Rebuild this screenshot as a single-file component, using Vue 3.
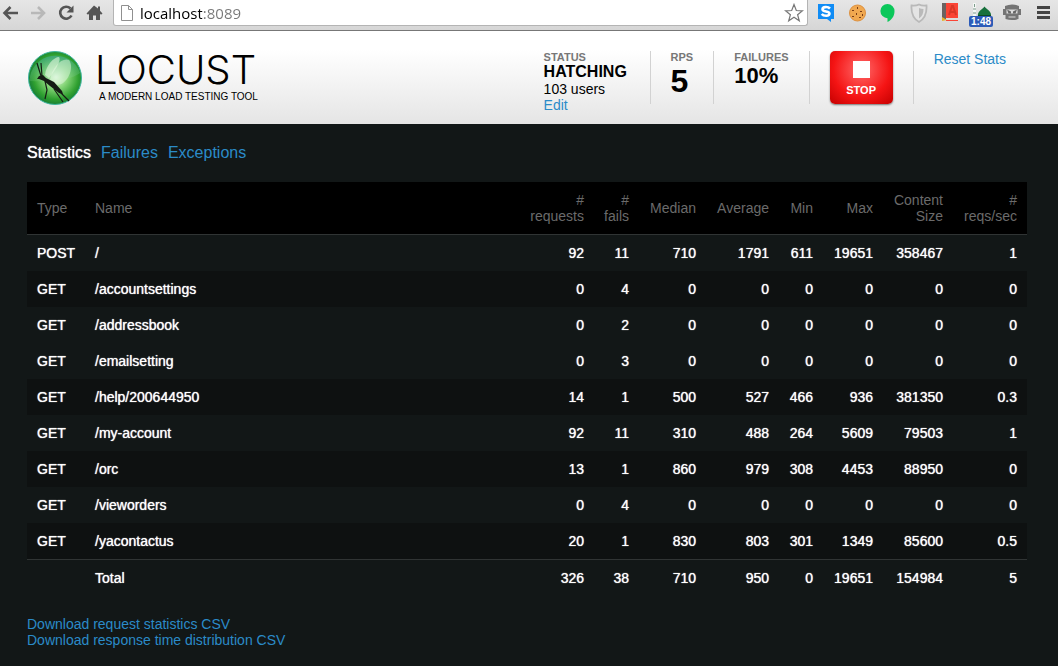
<template>
  <div class="page">
    <div class="browser-bar">
      <div class="nav-buttons">
        <button class="nav-button" aria-label="Back">
          <svg width="20" height="20" viewBox="0 0 20 20" fill="none" stroke="#555" stroke-width="2.6">
            <path d="M18 10H4.500M10.500 4l-6 6 6 6" />
          </svg>
        </button>
        <button class="nav-button" aria-label="Forward">
          <svg width="20" height="20" viewBox="0 0 20 20" fill="none" stroke="#b8b8b8" stroke-width="2.6">
            <path d="M3 10h13M10 4l6 6-6 6" />
          </svg>
        </button>
        <button class="nav-button" aria-label="Reload">
          <svg width="20" height="20" viewBox="0 0 20 20" fill="none">
            <path d="M15.5 12.5A6 6 0 1 1 14.5 5.5" stroke="#555" stroke-width="2.6" />
            <path d="M17.5 2.500v7h-7z" fill="#555" />
          </svg>
        </button>
        <button class="nav-button" aria-label="Home">
          <svg width="20" height="20" viewBox="0 0 20 20" fill="#555">
            <path d="M10 2.500L2.500 10.500l1.500 1.200 1-1V17h4v-4.500h3V17h4v-6.300l1 1 1.500-1.200-2.500-2.700V3.500h-2v2z" />
          </svg>
        </button>
      </div>
      <div class="address-bar">
        <svg class="page-icon" width="12" height="16" viewBox="0 0 12 16" fill="#fff" stroke="#909090">
          <path d="M.5.5h7l4 4v11H.5zM7.500.5v4h4" />
        </svg>
        <input class="address-input" type="text" aria-label="Address" value="localhost:8089" />
        <button class="star-button" aria-label="Bookmark">
          <svg width="20" height="20" viewBox="0 0 20 20" fill="#fff" stroke="#777" stroke-width="1.200">
            <path d="M10 1.500l2.300 6 6.200.3-4.900 3.900 1.700 6.100-5.300-3.500-5.300 3.500 1.700-6.100L1.500 7.800l6.200-.3z" />
          </svg>
        </button>
      </div>
      <div class="extensions">
        <button class="extension" aria-label="Chat">
          <svg width="20" height="20" viewBox="0 0 20 20">
            <path d="M2 1h16v15h-3v3l-4-3H2z" fill="#108cf5" />
            <path d="M14 5.500C12 3.500 6.500 3.500 6.500 6.200c0 3 7 1.400 7 4.400 0 3-6 2.600-7.800.4" fill="none" stroke="#fff" stroke-width="2.600" />
          </svg>
        </button>
        <button class="extension" aria-label="Cookies">
          <svg width="20" height="20" viewBox="0 0 20 20">
            <circle cx="10.500" cy="10" r="8" fill="#f0a850" stroke="#dd9140" />
            <path d="M5 7h2v1H5zM10 4h1v2h-1zM13 8h2v1h-2zM9 10h1v2H9zM5 13h2v1H5zM12 14h2v1h-2zM15 11h1v2h-1z" fill="#7a3d16" />
          </svg>
        </button>
        <button class="extension" aria-label="Hangouts">
          <svg width="20" height="20" viewBox="0 0 20 20">
            <path d="M9.500 1a7 7 0 0 0 0 14.200V19c4-2 7-5.500 7-10.700A7 7 0 0 0 9.500 1z" fill="#0bc75a" />
          </svg>
        </button>
        <button class="extension" aria-label="Shield">
          <svg width="20" height="20" viewBox="0 0 20 20">
            <path d="M2.500 2.500Q7 3 10 1.500 13 3 17.500 2.500C18 10 16 15.500 10 19 4 15.500 2 10 2.500 2.500z" fill="#e4e4e4" stroke="#b9b9b9" stroke-width="1.800" />
            <path d="M10 5q2 1 4.500 1c0 4.500-1.500 7.500-4.500 9.500z" fill="#b9b9b9" />
          </svg>
        </button>
        <button class="extension" aria-label="Dictionary">
          <svg width="20" height="20" viewBox="0 0 20 20">
            <path d="M2 0h4v16H2z" fill="#6b6260" />
            <path d="M6 0h12v15H6z" fill="#fa4435" />
            <path d="M9 12l3-9h1l3 9M10.500 9h4" fill="none" stroke="#d93727" stroke-width="2" />
            <path d="M6 17.500h12" stroke="#fa4435" />
            <path d="M2 14l5 3-5 1z" fill="#e5b32d" />
          </svg>
        </button>
        <button class="extension" aria-label="Prayer times">
          <svg width="22" height="20" viewBox="0 0 22 20">
            <path d="M4.500 0v15" stroke="#f4f7f5" stroke-width="3" />
            <path d="M4.500 1v3M3 6h3M3 10h3" stroke="#7d9a8a" />
            <path d="M8 14c-1-6 4-7 6.500-10.500C17 7 22 8 21 14z" fill="#17703c" />
            <path d="M8 12h13v3H8z" fill="#0d4a26" />
          </svg>
          <span class="badge">1:48</span>
        </button>
        <button class="extension" aria-label="Robot">
          <svg width="20" height="20" viewBox="0 0 20 20">
            <path d="M3 3q7-3 14 0v3h2v6h-2.500v4q-6.500 2-13 0v-4H1V6h2z" fill="#747474" />
            <path d="M4.500 6.500h11v4h-11zM6.500 13.500h7v1h-7z" fill="#dcdcdc" />
            <path d="M5 6.500l4 2v2H6.500zM15 6.500l-4 2v2h2.500z" fill="#666" />
          </svg>
        </button>
        <button class="extension" aria-label="Menu">
          <svg width="20" height="20" viewBox="0 0 20 20" stroke="#444" stroke-width="3">
            <path d="M4 4.500h13M4 9.500h13M4 14.500h13" />
          </svg>
        </button>
      </div>
    </div>

    <header class="top">
      <div class="logo">
        <svg class="logo-mark" width="54" height="54" viewBox="0 0 54 54">
          <defs>
            <radialGradient id="ball" cx="52%" cy="48%" r="54%">
              <stop offset="0" stop-color="#f2fff0" />
              <stop offset="0.400" stop-color="#86d578" />
              <stop offset="0.780" stop-color="#2fa030" />
              <stop offset="1" stop-color="#157a35" />
            </radialGradient>
            <linearGradient id="shine" x1="0" y1="0" x2="0" y2="1">
              <stop offset="0" stop-color="#3ea99a" />
              <stop offset="1" stop-color="#8fd696" stop-opacity="0.300" />
            </linearGradient>
          </defs>
          <circle cx="27" cy="27" r="26.500" fill="url(#ball)" stroke="#3fb5a0" />
          <path d="M1.500 30A26 26 0 0 1 52 22Q38 32 1.500 30z" fill="url(#shine)" opacity="0.600" />
          <path d="M17 24C18 14 26 6 31 6c3 4-6 16-10 21z" fill="#e4f9df" opacity="0.600" />
          <path d="M22 29C24 16 34 6 41 9c6 8-2 25-12 25z" fill="#e4f9df" opacity="0.500" />
          <path d="M9 28l2-3 4-1 3 3 8 4 8 9 1 3-4-1-9-7-6-5-5-2z" fill="#151c14" />
          <path d="M13 25L9 12M14 25l-1-13M17 30l2 9-2 9M26 38l9 13M31 40l10 10" fill="none" stroke="#151c14" stroke-width="1.200" />
        </svg>
        <div class="logo-words">
          <div class="logo-name">LOCUST</div>
          <div class="logo-tagline">A MODERN LOAD TESTING TOOL</div>
        </div>
      </div>
      <div class="boxes">
        <div class="box status-box">
          <div class="label">STATUS</div>
          <div class="status-value">HATCHING</div>
          <div class="users">{{ userCount }} users</div>
          <a class="edit" href="#">Edit</a>
        </div>
        <div class="box">
          <div class="label">RPS</div>
          <div class="rps-value">5</div>
        </div>
        <div class="box">
          <div class="label">FAILURES</div>
          <div class="fail-value">10%</div>
        </div>
        <div class="box">
          <button class="stop-button"><span class="stop-square"></span>STOP</button>
        </div>
        <div class="box">
          <a class="reset" href="#">Reset Stats</a>
        </div>
      </div>
    </header>

    <main class="content">
      <nav class="tabs">
        <a
          v-for="tab in tabs"
          :key="tab"
          href="#"
          class="tab"
          :class="{ active: tab === currentTab }"
          @click.prevent="currentTab = tab"
        >{{ tab }}</a>
      </nav>

      <table class="stats">
        <colgroup>
          <col class="col-type" />
          <col />
          <col class="col-requests" />
          <col class="col-fails" />
          <col class="col-median" />
          <col class="col-average" />
          <col class="col-min" />
          <col class="col-max" />
          <col class="col-size" />
          <col class="col-rps" />
        </colgroup>
        <thead>
          <tr>
            <th v-for="column in columns" :key="column" scope="col">{{ column }}</th>
          </tr>
        </thead>
        <tbody>
          <tr v-for="(row, index) in rows" :key="row[1]" :class="{ dark: darkRows.includes(index) }">
            <td v-for="(cell, i) in row" :key="i">{{ cell }}</td>
          </tr>
        </tbody>
        <tfoot>
          <tr>
            <td v-for="(cell, i) in total" :key="i">{{ cell }}</td>
          </tr>
        </tfoot>
      </table>

      <div class="downloads">
        <a href="#">Download request statistics CSV</a>
        <a href="#">Download response time distribution CSV</a>
      </div>
    </main>
  </div>
</template>

<script setup>
import { ref } from 'vue'

const userCount = ref(103)
const tabs = ['Statistics', 'Failures', 'Exceptions']
const currentTab = ref('Statistics')

const columns = [
  'Type', 'Name', '# requests', '# fails', 'Median', 'Average', 'Min', 'Max', 'Content Size', '# reqs/sec'
]

const rows = [
  ['POST', '/', 92, 11, 710, 1791, 611, 19651, 358467, 1],
  ['GET', '/accountsettings', 0, 4, 0, 0, 0, 0, 0, 0],
  ['GET', '/addressbook', 0, 2, 0, 0, 0, 0, 0, 0],
  ['GET', '/emailsetting', 0, 3, 0, 0, 0, 0, 0, 0],
  ['GET', '/help/200644950', 14, 1, 500, 527, 466, 936, 381350, 0.3],
  ['GET', '/my-account', 92, 11, 310, 488, 264, 5609, 79503, 1],
  ['GET', '/orc', 13, 1, 860, 979, 308, 4453, 88950, 0],
  ['GET', '/vieworders', 0, 4, 0, 0, 0, 0, 0, 0],
  ['GET', '/yacontactus', 20, 1, 830, 803, 301, 1349, 85600, 0.5]
]

const darkRows = [1, 4, 6, 8]

const total = ['', 'Total', 326, 38, 710, 950, 0, 19651, 154984, 5]
</script>

<style>
body {
  margin: 0;
  background: #121717;
}
</style>

<style scoped>
.page {
  min-height: 100vh;
  font-family: "Liberation Sans", Arial, sans-serif;
  font-size: 14px;
  line-height: 16px;
  color: #fff;
}

a {
  color: #2b8bc8;
  text-decoration: none;
}

button {
  border: none;
  padding: 0;
  background: none;
  font-family: inherit;
  cursor: pointer;
}

svg {
  display: block;
}

.browser-bar {
  display: flex;
  height: 30px;
  background: linear-gradient(#e6e6e6, #d6d6d6);
  border-bottom: 1px solid #777;
}

.nav-buttons {
  display: flex;
  align-items: flex-start;
  gap: 8px;
  padding: 3px 9px 0 0;
}

.nav-button {
  width: 20px;
  height: 20px;
}

.address-bar {
  flex: 1;
  min-width: 0;
  height: 26px;
  display: flex;
  align-items: center;
  gap: 7px;
  padding: 0 3px 0 7px;
  box-sizing: border-box;
  background: #fff;
  border: 1px solid #b4b4b4;
  border-top: none;
  border-radius: 0 0 3px 3px;
}

.address-input {
  flex: 1;
  min-width: 0;
  border: none;
  padding: 0;
  outline: none;
  font-family: "Open Sans", sans-serif;
  font-size: 15px;
  line-height: 22px;
  color: transparent;
  background: linear-gradient(to right, #000 62px, #777 62px);
  background-clip: text;
}

.extensions {
  display: flex;
  padding-left: 2px;
}

.extension {
  position: relative;
  width: 31px;
  height: 26px;
  display: flex;
  align-items: center;
  justify-content: center;
}

.badge {
  position: absolute;
  left: 4px;
  bottom: -1px;
  padding: 0 2px;
  border-radius: 2px;
  background: #2c5bb8;
  color: #fff;
  font-size: 10px;
  font-weight: bold;
  line-height: 11px;
}

.top {
  display: flex;
  justify-content: space-between;
  padding: 20px 32px 20px 28px;
  background: linear-gradient(#fff, #fff 20%, #e5e5e5);
  color: #000;
}

.logo {
  display: flex;
  gap: 13px;
  height: 53px;
}

.logo-name {
  font-family: Inter, Lato, sans-serif;
  font-size: 40px;
  font-weight: 300;
  line-height: 38px;
}

.logo-tagline {
  padding-left: 4px;
  font-size: 10px;
  line-height: 16px;
}

.boxes {
  display: flex;
  height: 53px;
}

.box {
  padding: 0 20px;
  border-right: 1px solid #d2d2d2;
}

.box:last-child {
  border-right: none;
}

.status-box {
  min-width: 86px;
}

.label {
  color: #777;
  font-size: 11px;
  font-weight: bold;
  line-height: 12px;
}

.status-value {
  font-size: 16px;
  font-weight: bold;
  line-height: 18px;
}

.edit,
.reset {
  display: block;
}

.rps-value {
  font-size: 32px;
  font-weight: bold;
  line-height: 36px;
}

.fail-value {
  font-size: 22px;
  font-weight: bold;
  line-height: 26px;
}

.stop-button {
  width: 63px;
  height: 53px;
  display: flex;
  flex-direction: column;
  align-items: center;
  justify-content: center;
  gap: 6px;
  padding-top: 2px;
  border-radius: 5px;
  background: radial-gradient(circle at 50% 35%, #ff6a6a, #f51414 60%, #c40000);
  box-shadow: 0 1px 2px rgba(0, 0, 0, 0.5);
  color: #fff;
  font-size: 11px;
  font-weight: bold;
  line-height: 12px;
}

.stop-square {
  width: 17px;
  height: 17px;
  background: #fff;
}

.content {
  padding: 21px 31px 16px 27px;
}

.tabs {
  display: flex;
  gap: 10px;
  padding-bottom: 21px;
  font-size: 16px;
}

.tab.active {
  color: #fff;
  text-shadow: 0 0 1px #fff;
}

.stats {
  width: 100%;
  table-layout: fixed;
  border-collapse: separate;
  border-spacing: 0;
}

.col-type {
  width: 58px;
}

.col-requests {
  width: 75px;
}

.col-fails {
  width: 45px;
}

.col-median {
  width: 67px;
}

.col-average {
  width: 73px;
}

.col-min {
  width: 44px;
}

.col-max {
  width: 60px;
}

.col-size {
  width: 70px;
}

.col-rps {
  width: 74px;
}

th,
td {
  padding: 10px;
  text-align: right;
}

th:nth-child(-n + 2),
td:nth-child(-n + 2) {
  text-align: left;
}

th {
  background: #000;
  border-bottom: 1px solid #303434;
  color: #6b6b6b;
  font-weight: normal;
}

td {
  text-shadow: 0 0 1px #fff;
}

tr.dark {
  background: #0e1111;
}

tfoot td {
  border-top: 1px solid #303434;
}

.downloads {
  display: flex;
  flex-direction: column;
  align-items: flex-start;
  padding-top: 20px;
}
</style>
